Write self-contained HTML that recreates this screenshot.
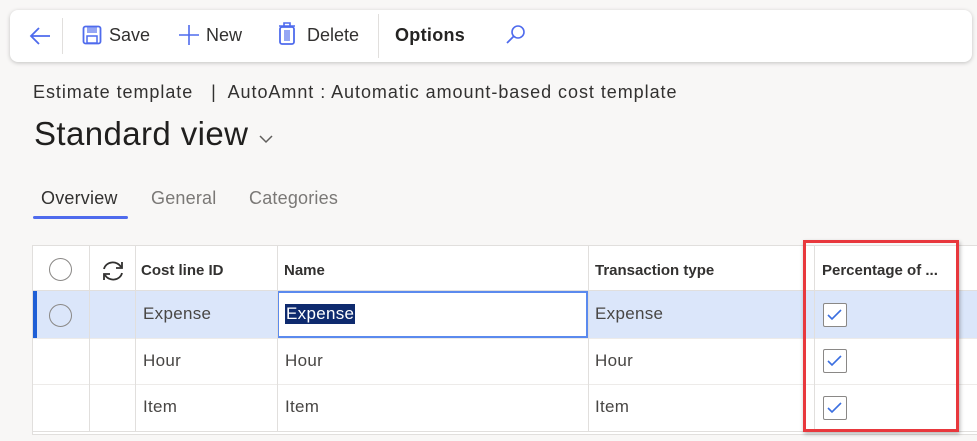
<!DOCTYPE html>
<html><head><style>
*{margin:0;padding:0;box-sizing:border-box}
body{width:977px;height:441px;background:#f8f7f6;font-family:"Liberation Sans",sans-serif;color:#323130;position:relative;overflow:hidden}
.abs{position:absolute;white-space:nowrap}
.tb{position:absolute;left:10px;top:10px;width:962px;height:52px;background:#fff;border-radius:8px;box-shadow:0 1px 4px rgba(0,0,0,.22)}
.t{font-size:18px}
.grid{position:absolute;left:32px;top:245px;width:960px;height:190px;background:#fff;border:1px solid #e1dfdd}
.vl{position:absolute;top:0;width:1px;height:186px;background:#e1dfdd}
.hl{position:absolute;left:0;width:960px;height:1px;background:#edebe9}
.cell{position:absolute;font-size:17px;color:#484644;letter-spacing:.3px}
.hd{position:absolute;top:16px;font-size:15px;font-weight:bold;color:#323130}
.radio{position:absolute;width:23px;height:23px;border:1.5px solid #8a8886;border-radius:50%}
.cb{position:absolute;left:790px;width:24px;height:24px;border:1.5px solid #8a8886;border-radius:2px;background:#fff}
</style></head><body>
<div class="tb">
<svg class="abs" style="left:18px;top:15px" width="24" height="22" viewBox="0 0 24 22"><path d="M22 11H3M11 3L3 11l8 8" stroke="#4f6bed" stroke-width="1.8" fill="none"/></svg>
<div class="abs" style="left:52px;top:8px;width:1px;height:36px;background:#e1dfdd"></div>
<svg class="abs" style="left:72px;top:15px" width="20" height="20" viewBox="0 0 20 20"><rect x="1.5" y="1.5" width="17" height="17" rx="2" fill="none" stroke="#4f6bed" stroke-width="1.8"/><rect x="5" y="2" width="10" height="6" fill="#4f6bed" opacity=".6"/><rect x="5" y="11" width="10" height="7" fill="none" stroke="#4f6bed" stroke-width="1.5"/></svg>
<div class="abs t" style="left:99px;top:15px">Save</div>
<svg class="abs" style="left:168px;top:14px" width="22" height="22" viewBox="0 0 22 22"><path d="M11 1v20M1 11h20" stroke="#4f6bed" stroke-width="1.6"/></svg>
<div class="abs t" style="left:196px;top:15px">New</div>
<svg class="abs" style="left:268px;top:12px" width="18" height="24" viewBox="0 0 18 24"><rect x="2" y="5" width="14" height="17" rx="2" fill="none" stroke="#4f6bed" stroke-width="1.8"/><rect x="6" y="8" width="6" height="11" fill="#4f6bed" opacity=".6"/><path d="M1 4h16M6 4V1h6v3" stroke="#4f6bed" stroke-width="1.6" fill="none"/></svg>
<div class="abs t" style="left:297px;top:15px">Delete</div>
<div class="abs" style="left:368px;top:4px;width:1px;height:44px;background:#e1dfdd"></div>
<div class="abs t" style="left:385px;top:15px;font-weight:bold;color:#252423;letter-spacing:.3px">Options</div>
<svg class="abs" style="left:494px;top:14px" width="22" height="22" viewBox="0 0 22 22"><circle cx="14" cy="8" r="6" fill="none" stroke="#4f6bed" stroke-width="1.6"/><path d="M10 12L3 19" stroke="#4f6bed" stroke-width="1.8"/></svg>
</div>
<div class="abs" style="left:33px;top:82px;font-size:18px;letter-spacing:.95px;color:#323130">Estimate template &nbsp;&nbsp;|&nbsp; AutoAmnt : Automatic amount-based cost template</div>
<div class="abs" style="left:34px;top:115px;font-size:33px;letter-spacing:.4px;color:#201f1e">Standard view</div>
<svg class="abs" style="left:258px;top:133px" width="16" height="12" viewBox="0 0 16 12"><path d="M2 3l6 6 6-6" stroke="#605e5c" stroke-width="1.5" fill="none"/></svg>
<div class="abs" style="left:41px;top:188px;font-size:18px;color:#323130;letter-spacing:.2px">Overview</div>
<div class="abs" style="left:151px;top:188px;font-size:18px;color:#7a7876;letter-spacing:.2px">General</div>
<div class="abs" style="left:249px;top:188px;font-size:18px;color:#7a7876;letter-spacing:.2px">Categories</div>
<div class="abs" style="left:33px;top:216px;width:95px;height:3px;background:#4f6bed;border-radius:2px"></div>

<div class="grid">
<div class="abs" style="left:0;top:45px;width:960px;height:47px;background:#dbe6fa"></div>
<div class="abs" style="left:244px;top:45px;width:311px;height:47px;background:#fff;border:2px solid #5b8aee"></div>
<div class="abs" style="left:0;top:45px;width:4px;height:47px;background:#1f5fd6"></div>
<div class="hl" style="top:44px;background:#e1dfdd"></div>
<div class="hl" style="top:92px"></div>
<div class="hl" style="top:138px"></div>
<div class="hl" style="top:185px;background:#e1dfdd"></div>
<div class="vl" style="left:56px"></div>
<div class="vl" style="left:102px"></div>
<div class="vl" style="left:244px"></div>
<div class="vl" style="left:555px"></div>
<div class="vl" style="left:781px"></div>
<div class="radio" style="left:16px;top:12px"></div>
<div class="radio" style="left:16px;top:58px"></div>
<svg class="abs" style="left:67px;top:13px" width="26" height="24" viewBox="0 0 26 24"><path d="M4 10a9 8 0 0 1 17-2M22 14a9 8 0 0 1-17 2" stroke="#323130" stroke-width="1.8" fill="none"/><path d="M22 3v6h-6M4 21v-6h6" stroke="#323130" stroke-width="1.8" fill="none"/></svg>
<div class="hd" style="left:108px">Cost line ID</div>
<div class="hd" style="left:251px">Name</div>
<div class="hd" style="left:562px">Transaction type</div>
<div class="hd" style="left:789px">Percentage of ...</div>
<div class="cell" style="left:110px;top:58px">Expense</div>
<div class="cell" style="left:252px;top:58px;background:#0e2a6e;color:#fff;padding:0 1px">Expense</div>
<div class="cell" style="left:562px;top:58px">Expense</div>
<div class="cell" style="left:110px;top:105px">Hour</div>
<div class="cell" style="left:252px;top:105px">Hour</div>
<div class="cell" style="left:562px;top:105px">Hour</div>
<div class="cell" style="left:110px;top:151px">Item</div>
<div class="cell" style="left:252px;top:151px">Item</div>
<div class="cell" style="left:562px;top:151px">Item</div>
<div class="cb" style="top:57px"><svg width="21" height="21" viewBox="0 0 21 21"><path d="M4 11l4 4 9-9" stroke="#3b6fe0" stroke-width="1.6" fill="none"/></svg></div>
<div class="cb" style="top:103px"><svg width="21" height="21" viewBox="0 0 21 21"><path d="M4 11l4 4 9-9" stroke="#3b6fe0" stroke-width="1.6" fill="none"/></svg></div>
<div class="cb" style="top:150px"><svg width="21" height="21" viewBox="0 0 21 21"><path d="M4 11l4 4 9-9" stroke="#3b6fe0" stroke-width="1.6" fill="none"/></svg></div>
</div>
<div class="abs" style="left:803px;top:240px;width:156px;height:192px;border:3px solid #e8383d;box-shadow:1px 2px 4px rgba(0,0,0,.3)"></div>
</body></html>
